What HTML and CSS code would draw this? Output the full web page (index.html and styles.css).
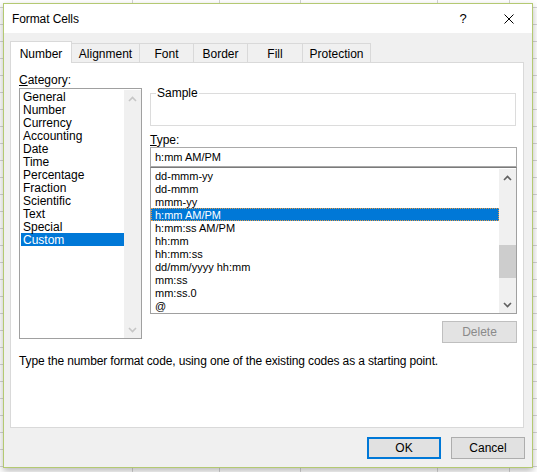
FILE: index.html
```html
<!DOCTYPE html>
<html lang="en">
<head>
<meta charset="utf-8">
<title>Format Cells</title>
<link rel="stylesheet" href="styles.css">
</head>
<body>
<div class="dialog">
  <div class="titlebar">
    <span class="title">Format Cells</span>
    <span class="cap-btn help">?</span>
    <span class="cap-btn close"><svg width="10" height="10" viewBox="0 0 10 10"><path d="M0.5 0.5L9.5 9.5M9.5 0.5L0.5 9.5" stroke="#000" stroke-width="1" fill="none"/></svg></span>
  </div>
  <div class="content">
    <div class="tabs">
      <div class="tab active w-number">Number</div>
      <div class="tab w-align">Alignment</div>
      <div class="tab w-font">Font</div>
      <div class="tab w-border">Border</div>
      <div class="tab w-fill">Fill</div>
      <div class="tab w-prot">Protection</div>
    </div>
    <div class="panel">
      <div class="columns">
        <div class="col-left">
          <div class="label"><u>C</u>ategory:</div>
          <div class="listbox cat">
            <ul class="items">
              <li>General</li>
              <li>Number</li>
              <li>Currency</li>
              <li>Accounting</li>
              <li>Date</li>
              <li>Time</li>
              <li>Percentage</li>
              <li>Fraction</li>
              <li>Scientific</li>
              <li>Text</li>
              <li>Special</li>
              <li class="sel">Custom</li>
            </ul>
            <div class="scrollbar disabled">
              <div class="sb-btn"><svg width="9" height="6" viewBox="0 0 9 6"><path d="M1 5L4.5 1.5L8 5" stroke="currentColor" stroke-width="1.6" fill="none"/></svg></div>
              <div class="sb-track"></div>
              <div class="sb-btn"><svg width="9" height="6" viewBox="0 0 9 6"><path d="M1 1L4.5 4.5L8 1" stroke="currentColor" stroke-width="1.6" fill="none"/></svg></div>
            </div>
          </div>
        </div>
        <div class="col-right">
          <fieldset class="sample">
            <legend>Sample</legend>
            <div class="sample-body"></div>
          </fieldset>
          <div class="label type-label"><u>T</u>ype:</div>
          <div class="input">h:mm AM/PM</div>
          <div class="listbox types">
            <ul class="items">
              <li>dd-mmm-yy</li>
              <li>dd-mmm</li>
              <li>mmm-yy</li>
              <li class="sel focus">h:mm AM/PM</li>
              <li>h:mm:ss AM/PM</li>
              <li>hh:mm</li>
              <li>hh:mm:ss</li>
              <li>dd/mm/yyyy hh:mm</li>
              <li>mm:ss</li>
              <li>mm:ss.0</li>
              <li>@</li>
            </ul>
            <div class="scrollbar">
              <div class="sb-btn"><svg width="9" height="6" viewBox="0 0 9 6"><path d="M1 5L4.5 1.5L8 5" stroke="currentColor" stroke-width="1.6" fill="none"/></svg></div>
              <div class="sb-track"><div class="sb-thumb"></div></div>
              <div class="sb-btn"><svg width="9" height="6" viewBox="0 0 9 6"><path d="M1 1L4.5 4.5L8 1" stroke="currentColor" stroke-width="1.6" fill="none"/></svg></div>
            </div>
          </div>
          <button class="btn btn-disabled delete">Delete</button>
        </div>
      </div>
      <p class="hint">Type the number format code, using one of the existing codes as a starting point.</p>
    </div>
    <div class="footer">
      <button class="btn btn-default">OK</button>
      <button class="btn">Cancel</button>
    </div>
  </div>
</div>
</body>
</html>
```
FILE: styles.css
```css
html, body {
  margin: 0;
}

body {
  width: 537px;
  height: 472px;
  overflow: hidden;
  box-sizing: border-box;
  padding: 3px 0 0 3px;
  font-family: "Liberation Sans", Arial, sans-serif;
  font-size: 12px;
  color: #000;
  background-color: #fff;
  background-image:
    linear-gradient(#d4d4d4, #d4d4d4),
    linear-gradient(#d4d4d4, #d4d4d4),
    linear-gradient(#d4d4d4, #d4d4d4),
    linear-gradient(#d4d4d4, #d4d4d4),
    linear-gradient(#d4d4d4, #d4d4d4),
    repeating-linear-gradient(to bottom, transparent 0, transparent 7px, #d4d4d4 7px, #d4d4d4 8px, transparent 8px, transparent 17px);
  background-size: 1px 100%, 1px 100%, 1px 100%, 1px 100%, 1px 100%, 100% 100%;
  background-position: 132px 0, 219px 0, 300px 0, 437px 0, 509px 0, 0 0;
  background-repeat: no-repeat;
}

.dialog {
  width: 530px;
  height: 465px;
  box-sizing: border-box;
  border: 1px solid #b4c972;
  background: #f0f0f0;
  box-shadow: 0 3px 7px rgba(0, 0, 0, 0.28);
  display: flex;
  flex-direction: column;
}

/* title bar */
.titlebar {
  height: 29px;
  background: #fff;
  display: flex;
  align-items: center;
  padding-left: 8px;
}

.title {
  flex: 1;
  font-size: 12px;
  letter-spacing: -0.1px;
}

.cap-btn {
  width: 46px;
  height: 29px;
  display: flex;
  align-items: center;
  justify-content: center;
}

.help {
  font-size: 13px;
}

/* content */
.content {
  flex: 1;
  padding: 8px 7px 0 6px;
  display: flex;
  flex-direction: column;
}

.tabs {
  display: flex;
  align-items: flex-end;
  height: 21px;
}

.tab {
  box-sizing: border-box;
  height: 19px;
  border: 1px solid #d9d9d9;
  border-bottom: 0;
  padding-top: 3px;
  line-height: 15px;
  text-align: center;
  background: #f0f0f0;
}

.tab + .tab {
  margin-left: -1px;
}

.tab.active {
  height: 22px;
  margin-bottom: -1px;
  padding-top: 5px;
  background: #fff;
  position: relative;
  z-index: 1;
}

.w-number { width: 62px; }
.w-align { width: 69px; }
.w-font { width: 55px; }
.w-border { width: 55px; }
.w-fill { width: 56px; }
.w-prot { width: 69px; }

.panel {
  width: 514px;
  height: 366px;
  box-sizing: border-box;
  border: 1px solid #d9d9d9;
  background: #fff;
  padding: 9px 5px 0 8px;
}

.columns {
  display: flex;
  gap: 8px;
}

.col-left {
  width: 123px;
}

.col-right {
  width: 367px;
  display: flex;
  flex-direction: column;
}

.label {
  height: 15px;
  line-height: 16px;
}

/* list boxes */
.listbox {
  box-sizing: border-box;
  display: flex;
  background: #fff;
}

.listbox .items {
  list-style: none;
  margin: 1px 0 0 1px;
  padding: 0;
  flex: 1;
}

.listbox .items li {
  height: 13px;
  line-height: 15px;
  white-space: nowrap;
}

.listbox .items li.sel {
  background: #0078d7;
  color: #fff;
}

.listbox .items li.focus {
  outline: 1px dotted #e39a45;
  outline-offset: -1px;
}

.cat {
  margin-top: 1px;
  height: 251px;
  border: 1px solid #a0a0a0;
}

.cat .items li {
  padding-left: 2px;
}

.types {
  height: 147px;
  border: 1px solid #a0a0a0;
  border-top-color: #7a7a7a;
}

.types .items {
  margin-left: 0;
}

.types .items li {
  padding-left: 4px;
  font-size: 11px;
  line-height: 14px;
}

.scrollbar {
  width: 17px;
  margin-top: 1px;
  background: #f0f0f0;
  display: flex;
  flex-direction: column;
  color: #606060;
}

.scrollbar.disabled {
  color: #c6c6c6;
}

.sb-btn {
  height: 17px;
  display: flex;
  align-items: center;
  justify-content: center;
}

.sb-btn svg {
  display: block;
}

.sb-track {
  flex: 1;
  padding-top: 59px;
}

.sb-thumb {
  height: 33px;
  background: #cdcdcd;
}

/* sample */
.sample {
  width: 366px;
  box-sizing: border-box;
  margin: 14px 0 0;
  padding: 0 0 0 5px;
  border: 1px solid #dcdcdc;
  min-inline-size: 0;
}

.sample legend {
  padding: 0 1px;
  line-height: 15px;
  font-size: 12px;
}

.sample-body {
  height: 24px;
}

.type-label {
  margin-top: 6px;
}

.input {
  box-sizing: border-box;
  height: 20px;
  border: 1px solid #a9a9a9;
  padding-left: 4px;
  line-height: 18px;
  font-size: 11px;
}

/* buttons */
.btn {
  box-sizing: border-box;
  width: 74px;
  height: 22px;
  margin: 0;
  padding: 0;
  border: 1px solid #adadad;
  background: #e1e1e1;
  font-family: "Liberation Sans", Arial, sans-serif;
  font-size: 12px;
  color: #000;
}

.btn-default {
  border: 2px solid #0078d7;
}

.btn-disabled {
  color: #8a8a8a;
  border-color: #bfbfbf;
  background: #e3e3e3;
}

.delete {
  width: 75px;
  align-self: flex-end;
  margin-top: 7px;
}

.hint {
  margin: 11px 0 0;
  line-height: 15px;
  letter-spacing: -0.13px;
}

.footer {
  display: flex;
  justify-content: flex-end;
  gap: 10px;
  padding-top: 9px;
}
```
